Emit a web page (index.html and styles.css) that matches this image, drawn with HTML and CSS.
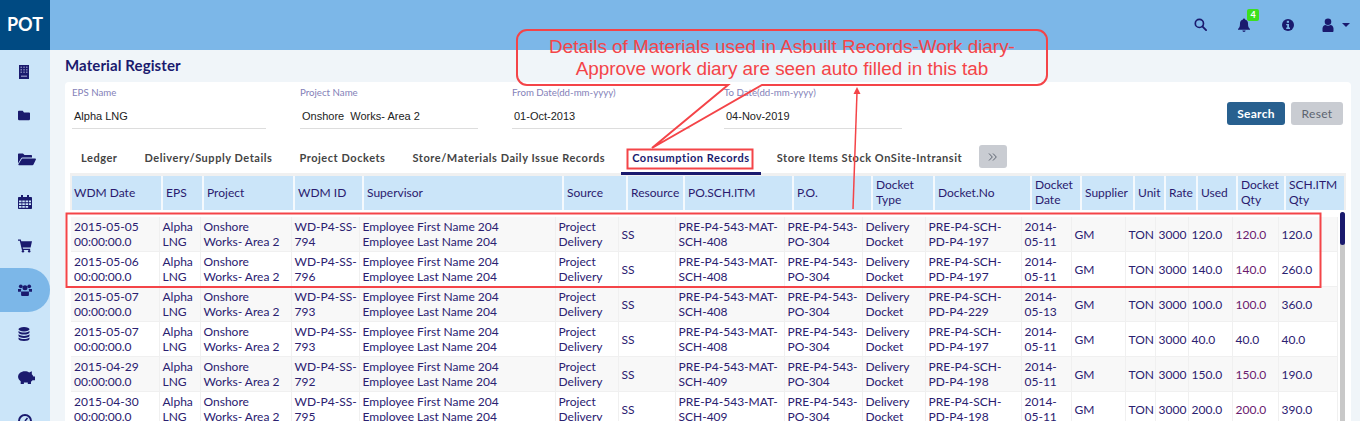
FILE: index.html
```html
<!DOCTYPE html>
<html lang="en">
<head>
    <meta charset="UTF-8">
    <meta name="viewport" content="width=device-width, initial-scale=1.0">
    <title>POT - Material Register</title>
    <link rel="stylesheet" href="styles.css">
</head>
<body>
    <header class="topbar">
        <div class="logo">POT</div>
        <div class="top-icons">
            <svg class="ti ti-search" viewBox="0 0 14 14"><circle cx="5.8" cy="5.8" r="4.4" fill="none" stroke="#1a1a6e" stroke-width="1.8"/><path d="M9 9l4 4" stroke="#1a1a6e" stroke-width="2" stroke-linecap="round"/></svg>
            <span class="bell">
                <svg class="ti" viewBox="0 0 14 14"><path d="M7 0.5c.6 0 1 .4 1 1 2 .4 3 2 3 4 0 3 .6 4.300 2 5.500v.8H1V11c1.400-1.200 2-2.500 2-5.500 0-2 1-3.600 3-4 0-.6.4-1 1-1zM5.400 12.600h3.200c0 .9-.7 1.400-1.600 1.400s-1.600-.5-1.600-1.400z" fill="#1a1a6e"/></svg>
                <span class="badge">4</span>
            </span>
            <svg class="ti ti-info" viewBox="0 0 14 14"><circle cx="7" cy="7" r="6" fill="#1a1a6e"/><rect x="5.800" y="2.800" width="2.200" height="2" fill="#7cb7e8"/><path d="M5.200 6h2.800v3.600h1V11H5.200V9.600h1V7.300h-1z" fill="#7cb7e8"/></svg>
            <span class="user">
                <svg class="ti" viewBox="0 0 14 14"><circle cx="7" cy="3.800" r="3.300" fill="#1a1a6e"/><path d="M1.500 13v-2.500C1.500 8.500 3 7.200 4.500 7c1.500 1 3.500 1 5 0 1.500.2 3 1.500 3 3.500V13c0 .6-.5 1-1 1h-9c-.5 0-1-.4-1-1z" fill="#1a1a6e"/></svg>
                <span class="caret"></span>
            </span>
        </div>
    </header>

    <div class="layout">
        <nav class="sidebar">
            <a class="nav-item"><svg viewBox="0 0 12 14"><path d="M1 0h10v14H1z" fill="#1a1a6e"/><path d="M2.500 1.500h1.500V3H2.500zM5.300 1.500h1.500V3H5.300zM8 1.500h1.500V3H8zM2.500 4h1.500v1.500H2.500zM5.300 4h1.500v1.500H5.300zM8 4h1.500v1.500H8zM2.500 6.500h1.500V8H2.500zM5.300 6.500h1.500V8H5.300zM8 6.500h1.500V8H8zM3 10.500h6V12H3z" fill="#7d7fb5"/></svg></a>
            <a class="nav-item"><svg viewBox="0 0 14 12"><path d="M1 1h4.500L7 3h6c.6 0 1 .4 1 1v7c0 .6-.4 1-1 1H1c-.6 0-1-.4-1-1V2c0-.6.4-1 1-1z" fill="#1a1a6e"/></svg></a>
            <a class="nav-item"><svg class="wide" viewBox="0 0 18 13"><path d="M0 11V2c0-.6.4-1 1-1h4l1.500 1.500H13c.6 0 1 .4 1 1V5H4.500C3.800 5 3.200 5.400 3 6z" fill="#1a1a6e"/><path d="M4 6h13.200c.6 0 .9.500.7 1l-2.400 5c-.2.500-.6.800-1.100.800H1c-.5 0-.8-.5-.6-1z" fill="#1a1a6e"/></svg></a>
            <a class="nav-item"><svg class="square" viewBox="0 0 14 14"><path d="M3 0h2v2h4V0h2v2h2c.6 0 1 .4 1 1v10c0 .6-.4 1-1 1H1c-.6 0-1-.4-1-1V3c0-.6.4-1 1-1h2z" fill="#1a1a6e"/><path d="M1 5.500h2.500v1.800H1zM4.300 5.500h2.500v1.800H4.300zM7.600 5.500h2.500v1.800H7.600zM10.900 5.500h2.100v1.800h-2.100zM1 8.200h2.500V10H1zM4.300 8.200h2.500V10H4.300zM7.600 8.200h2.500V10H7.600zM10.900 8.200h2.100V10h-2.100zM1 10.900h2.500v1.800H1zM4.300 10.900h2.500v1.800H4.300zM7.600 10.900h2.500v1.800H7.600z" fill="#cbe5f9"/></svg></a>
            <a class="nav-item"><svg class="square" viewBox="0 0 15 14"><path d="M0 0h3l.5 2H15l-1.500 6.500H5l.4 1.500H13v1.400H4.200L1.900 1.400H0z" fill="#1a1a6e"/><circle cx="5.300" cy="12.700" r="1.300" fill="#1a1a6e"/><circle cx="12" cy="12.700" r="1.300" fill="#1a1a6e"/></svg></a>
            <a class="nav-item active"><svg class="square" viewBox="0 0 15 13"><circle cx="3" cy="2.500" r="2" fill="#1a1a6e"/><circle cx="12" cy="2.500" r="2" fill="#1a1a6e"/><circle cx="7.500" cy="4" r="2.700" fill="#1a1a6e"/><path d="M0 5.500h3.500L3 8.500H0zM11.500 5.500H15v3h-3z" fill="#1a1a6e"/><path d="M3.300 8h8.400v3.500c0 .8-.6 1.500-1.400 1.500H4.700c-.8 0-1.400-.7-1.400-1.500z" fill="#1a1a6e"/></svg></a>
            <a class="nav-item"><svg viewBox="0 0 12 14"><ellipse cx="6" cy="2.200" rx="5.500" ry="2.200" fill="#1a1a6e"/><path d="M.5 4v1.500C.5 6.800 3 7.600 6 7.600s5.500-.8 5.500-2.100V4C10 5.200 8 5.600 6 5.600S2 5.200.5 4zM.5 7.300v1.500c0 1.300 2.500 2.100 5.500 2.100s5.500-.8 5.500-2.100V7.300C10 8.500 8 8.900 6 8.900S2 8.500.5 7.300zM.5 10.500V12c0 1.300 2.500 2 5.500 2s5.500-.7 5.500-2v-1.500C10 11.700 8 12.100 6 12.100s-4-.4-5.500-1.600z" fill="#1a1a6e"/></svg></a>
            <a class="nav-item nudge"><svg class="wide" viewBox="0 0 17 13"><path d="M7.500 1c1.700 0 3 .4 4 1.200L14 1v2.800c.7.700 1.100 1.400 1.400 2.200H17v3.500h-2.300c-.4.600-.9 1.100-1.500 1.500V13h-3v-1.300H6.500V13h-3v-2.500C2 9.400 1 7.900 1 6.300 1 3.200 3.800 1 7.500 1z" fill="#1a1a6e"/></svg></a>
            <a class="nav-item"><svg class="square" viewBox="0 0 14 14"><circle cx="7" cy="7" r="6" fill="none" stroke="#1a1a6e" stroke-width="2"/><path d="M7 7l2.500-3" stroke="#1a1a6e" stroke-width="1.500"/></svg></a>
        </nav>

        <main class="content">
            <h1 class="page-title">Material Register</h1>
            <section class="card">
                <div class="filters">
                    <div class="field f-eps"><label>EPS Name</label><div class="value">Alpha LNG</div></div>
                    <div class="field f-project"><label>Project Name</label><div class="value">Onshore &nbsp;Works- Area 2</div></div>
                    <div class="field f-from"><label>From Date(dd-mm-yyyy)</label><div class="value">01-Oct-2013</div></div>
                    <div class="field f-to"><label>To Date(dd-mm-yyyy)</label><div class="value">04-Nov-2019</div></div>
                    <div class="buttons">
                        <button class="btn btn-search">Search</button>
                        <button class="btn btn-reset">Reset</button>
                    </div>
                </div>

                <div class="tabs">
                    <a class="tab">Ledger</a>
                    <a class="tab">Delivery/Supply Details</a>
                    <a class="tab">Project Dockets</a>
                    <a class="tab">Store/Materials Daily Issue Records</a>
                    <a class="tab tab-active">Consumption Records</a>
                    <a class="tab">Store Items Stock OnSite-Intransit</a>
                    <span class="tab-next"><svg viewBox="0 0 10 8"><path d="M1 .5L4.300 4 1 7.500M5 .5L8.300 4 5 7.500" fill="none" stroke="#5c6470" stroke-width="1"/></svg></span>
                </div>

                <div class="table-wrap">
                    <div class="head-wrap">
                        <table class="head-table">
                            <colgroup><col class="h1"><col class="h2"><col class="h3"><col class="h4"><col class="h5"><col class="h6"><col class="h7"><col class="h8"><col class="h9"><col class="h10"><col class="h11"><col class="h12"><col class="h13"><col class="h14"><col class="h15"><col class="h16"><col class="h17"><col class="h18"></colgroup>
                            <tr><th>WDM Date</th><th>EPS</th><th>Project</th><th>WDM ID</th><th>Supervisor</th><th>Source</th><th>Resource</th><th>PO.SCH.ITM</th><th>P.O.</th><th>Docket Type</th><th>Docket.No</th><th>Docket Date</th><th>Supplier</th><th>Unit</th><th>Rate</th><th>Used</th><th>Docket Qty</th><th>SCH.ITM Qty</th></tr>
                        </table>
                    </div>
                    <div class="scroll-area">
                        <table class="body-table">
                            <colgroup><col class="b1"><col class="b2"><col class="b3"><col class="b4"><col class="b5"><col class="b6"><col class="b7"><col class="b8"><col class="b9"><col class="b10"><col class="b11"><col class="b12"><col class="b13"><col class="b14"><col class="b15"><col class="b16"><col class="b17"><col class="b18"></colgroup>
                            <tr><td>2015-05-05 00:00:00.0</td><td>Alpha LNG</td><td>Onshore<br>Works- Area 2</td><td>WD-P4-SS-794</td><td>Employee First Name 204<br>Employee Last Name 204</td><td>Project Delivery</td><td>SS</td><td>PRE-P4-543-MAT-SCH-408</td><td>PRE-P4-543-PO-304</td><td>Delivery Docket</td><td>PRE-P4-SCH-PD-P4-197</td><td>2014-05-11</td><td>GM</td><td>TON</td><td>3000</td><td>120.0</td><td class="qty">120.0</td><td>120.0</td></tr>
                            <tr><td>2015-05-06 00:00:00.0</td><td>Alpha LNG</td><td>Onshore<br>Works- Area 2</td><td>WD-P4-SS-796</td><td>Employee First Name 204<br>Employee Last Name 204</td><td>Project Delivery</td><td>SS</td><td>PRE-P4-543-MAT-SCH-408</td><td>PRE-P4-543-PO-304</td><td>Delivery Docket</td><td>PRE-P4-SCH-PD-P4-197</td><td>2014-05-11</td><td>GM</td><td>TON</td><td>3000</td><td>140.0</td><td class="qty">140.0</td><td>260.0</td></tr>
                            <tr><td>2015-05-07 00:00:00.0</td><td>Alpha LNG</td><td>Onshore<br>Works- Area 2</td><td>WD-P4-SS-793</td><td>Employee First Name 204<br>Employee Last Name 204</td><td>Project Delivery</td><td>SS</td><td>PRE-P4-543-MAT-SCH-408</td><td>PRE-P4-543-PO-304</td><td>Delivery Docket</td><td>PRE-P4-SCH-PD-P4-229</td><td>2014-05-13</td><td>GM</td><td>TON</td><td>3000</td><td>100.0</td><td class="qty">100.0</td><td>360.0</td></tr>
                            <tr><td>2015-05-07 00:00:00.0</td><td>Alpha LNG</td><td>Onshore<br>Works- Area 2</td><td>WD-P4-SS-793</td><td>Employee First Name 204<br>Employee Last Name 204</td><td>Project Delivery</td><td>SS</td><td>PRE-P4-543-MAT-SCH-408</td><td>PRE-P4-543-PO-304</td><td>Delivery Docket</td><td>PRE-P4-SCH-PD-P4-197</td><td>2014-05-11</td><td>GM</td><td>TON</td><td>3000</td><td>40.0</td><td>40.0</td><td>40.0</td></tr>
                            <tr><td>2015-04-29 00:00:00.0</td><td>Alpha LNG</td><td>Onshore<br>Works- Area 2</td><td>WD-P4-SS-792</td><td>Employee First Name 204<br>Employee Last Name 204</td><td>Project Delivery</td><td>SS</td><td>PRE-P4-543-MAT-SCH-409</td><td>PRE-P4-543-PO-304</td><td>Delivery Docket</td><td>PRE-P4-SCH-PD-P4-198</td><td>2014-05-11</td><td>GM</td><td>TON</td><td>3000</td><td>150.0</td><td class="qty">150.0</td><td>190.0</td></tr>
                            <tr><td>2015-04-30 00:00:00.0</td><td>Alpha LNG</td><td>Onshore<br>Works- Area 2</td><td>WD-P4-SS-795</td><td>Employee First Name 204<br>Employee Last Name 204</td><td>Project Delivery</td><td>SS</td><td>PRE-P4-543-MAT-SCH-409</td><td>PRE-P4-543-PO-304</td><td>Delivery Docket</td><td>PRE-P4-SCH-PD-P4-198</td><td>2014-05-11</td><td>GM</td><td>TON</td><td>3000</td><td>200.0</td><td class="qty">200.0</td><td>390.0</td></tr>
                        </table>
                        <div class="scrollbar"><div class="thumb"></div></div>
                    </div>
                </div>
            </section>
        </main>
    </div>

    <!-- annotation drawn on top of the screenshot -->
    <svg class="marks" viewBox="0 0 1360 421">
        <path d="M728 85H527a10 10 0 0 1-10-10V40a10 10 0 0 1 10-10H1037a10 10 0 0 1 10 10V75a10 10 0 0 1-10 10H762L652 148z" fill="none" stroke="#f44448" stroke-width="2"/>
        <path d="M853 209L857 92" stroke="#f44448" stroke-width="1.500"/>
        <path d="M857 87l-3.500 7h7z" fill="#f44448"/>
        <rect x="627.500" y="149.500" width="125" height="19" fill="none" stroke="#f44448" stroke-width="2"/>
        <rect x="66.500" y="213.500" width="1254" height="73.500" fill="none" stroke="#f44448" stroke-width="2"/>
    </svg>
    <div class="callout-text">Details of Materials used in Asbuilt Records-Work diary-<br>Approve work diary are seen auto filled in this tab</div>
</body>
</html>
```

FILE: styles.css
```css
* { box-sizing: border-box; }
html, body { height: 421px; overflow: hidden; }
body { margin: 0; font-family: Lato, Arial, sans-serif; background: #f0f5f9; color: #1a1a6e; }

.topbar { height: 50px; background: #7cb7e8; display: flex; justify-content: space-between; }
.logo { width: 50px; height: 50px; background: #004a82; color: white; font-size: 18px; font-weight: 700; line-height: 48px; text-align: center; }
.top-icons { display: flex; align-items: center; padding: 0 10px 1px 0; }
.ti { width: 14px; height: 14px; display: block; }
.ti-search { width: 13px; height: 13px; }
.bell { position: relative; margin-left: 30px; }
.badge { position: absolute; left: 10px; top: -9px; width: 12px; height: 12px; border-radius: 2px; background: #3de01e; color: white; font-size: 9px; font-weight: 700; line-height: 11px; text-align: center; }
.ti-info { margin-left: 30px; }
.user { display: flex; align-items: center; margin-left: 26px; }
.caret { margin-left: 7px; border: 4px solid transparent; border-top: 4px solid #1a1a6e; border-bottom: 0; }

.layout { display: flex; height: 371px; }
.sidebar { width: 50px; background: #cbe5f9; flex-shrink: 0; }
.nav-item { height: 43.500px; display: flex; align-items: center; padding-left: 18px; }
.nav-item svg { width: 12px; height: 14px; }
.nav-item svg.square { width: 14px; height: 14px; }
.nav-item svg.wide { width: 18px; height: 14px; }
.nav-item.nudge { padding-left: 17px; }
.nav-item.active { background: #7cb7e8; border-radius: 0 22px 22px 0; height: 44px; margin-top: 0.500px; }

.content { flex: 1; padding: 0 9px 0 15px; min-width: 0; }
.page-title { margin: 0; height: 32px; font-size: 15px; line-height: 31px; font-weight: 700; color: #1a1a6e; letter-spacing: 0.100px; }
.card { background: white; border-radius: 4px 4px 0 0; height: 339px; padding: 0 5px; }

.filters { height: 64px; display: flex; padding-left: 2px; }
.field { width: 178px; margin-right: 34px; padding-top: 4px; }
.f-eps { width: 194px; }
.field label { display: block; font-size: 9.700px; line-height: 12px; color: #8481b8; }
.value { height: 28px; margin-top: 3px; padding: 8px 2px 0; font-family: "Liberation Sans", Arial, sans-serif; font-size: 11px; color: #222; border-bottom: 1px solid #ddd; line-height: 15px; }
.buttons { margin-left: auto; display: flex; gap: 6px; padding: 20px 3px 0 0; align-items: flex-start; }
.btn { height: 23px; border: none; border-radius: 3px; font-family: Lato, Arial, sans-serif; font-size: 12px; letter-spacing: 0.300px; padding: 0; }
.btn-search { width: 58px; background: #28608f; color: white; font-weight: 700; }
.btn-reset { width: 52px; background: #c9ccd2; color: #5c6470; }

.tabs { height: 27px; display: flex; align-items: flex-start; gap: 5px; }
.tab { height: 29px; padding: 3px 11px 0; font-size: 11px; font-weight: 700; letter-spacing: 0.540px; line-height: 18px; color: #444; white-space: nowrap; flex-shrink: 0; }
.tab-active { border-bottom: 3px solid #1a1a6e; color: #1a1a6e; }
.tab-next { width: 28px; height: 23px; margin: -1px 0 0 1px; border-radius: 3px; background: #c9ccd2; display: flex; align-items: center; justify-content: center; }
.tab-next svg { width: 10px; height: 8px; }

.table-wrap { background: white; }
.head-wrap { background: #f0f0f0; padding: 3px 2px 0; }
.head-table { table-layout: fixed; border-collapse: collapse; width: 1272px; background: #cbe5f9; }
.head-table th { height: 34px; padding: 0 1px 2px 3px; font-size: 12px; font-weight: 400; text-align: left; line-height: 15px; letter-spacing: 0; color: #2a1a6e; border-right: 2px solid #f4f9fd; }
.head-table th:first-child { padding-left: 2px; }
.head-table th:last-child { border-right: 0; }
.h1 { width: 90px; } .h2 { width: 41px; } .h3 { width: 91px; } .h4 { width: 69px; } .h5 { width: 200px; } .h6 { width: 64px; }
.h7 { width: 57px; } .h8 { width: 109px; } .h9 { width: 79px; } .h10 { width: 62px; } .h11 { width: 97px; } .h12 { width: 50px; }
.h13 { width: 53px; } .h14 { width: 31px; } .h15 { width: 32px; } .h16 { width: 40px; } .h17 { width: 48px; } .h18 { width: 59px; }

.scroll-area { display: flex; align-items: flex-start; padding: 2px 0 0 1px; }
.body-table { table-layout: fixed; border-collapse: separate; border-spacing: 0; width: 1267px; margin-top: 5px; flex-shrink: 0; }
.body-table td { height: 35px; padding: 0 1px 0 2.500px; font-size: 12px; line-height: 15px; color: #2a2070; border-right: 1px solid #f0f0f0; border-bottom: 1px solid #f0f0f0; vertical-align: middle; }
.body-table td:first-child { padding-left: 3px; }
.body-table tr:nth-child(odd) td { background: #f8f8f8; }
.body-table .qty { color: #6a1a6e; }
.b1 { width: 89px; } .b2 { width: 41px; } .b3 { width: 91px; } .b4 { width: 68px; } .b5 { width: 196px; } .b6 { width: 63px; }
.b7 { width: 57px; } .b8 { width: 109px; } .b9 { width: 78px; } .b10 { width: 63px; } .b11 { width: 96px; } .b12 { width: 50px; }
.b13 { width: 54px; } .b14 { width: 30px; } .b15 { width: 33px; } .b16 { width: 44px; } .b17 { width: 46px; } .b18 { width: 59px; }
.scrollbar { width: 5px; height: 220px; margin-left: 2px; background: #c8c8c8; border-radius: 3px 3px 0 0; flex-shrink: 0; }
.thumb { height: 33px; background: #1a1a6e; border-radius: 3px; }

.marks { position: absolute; left: 0; top: 0; width: 1360px; height: 421px; pointer-events: none; }
.callout-text { position: absolute; left: 517px; top: 36px; width: 530px; text-align: center; font-family: "Liberation Sans", Arial, sans-serif; font-size: 18.900px; line-height: 22px; color: #f44448; }
```
